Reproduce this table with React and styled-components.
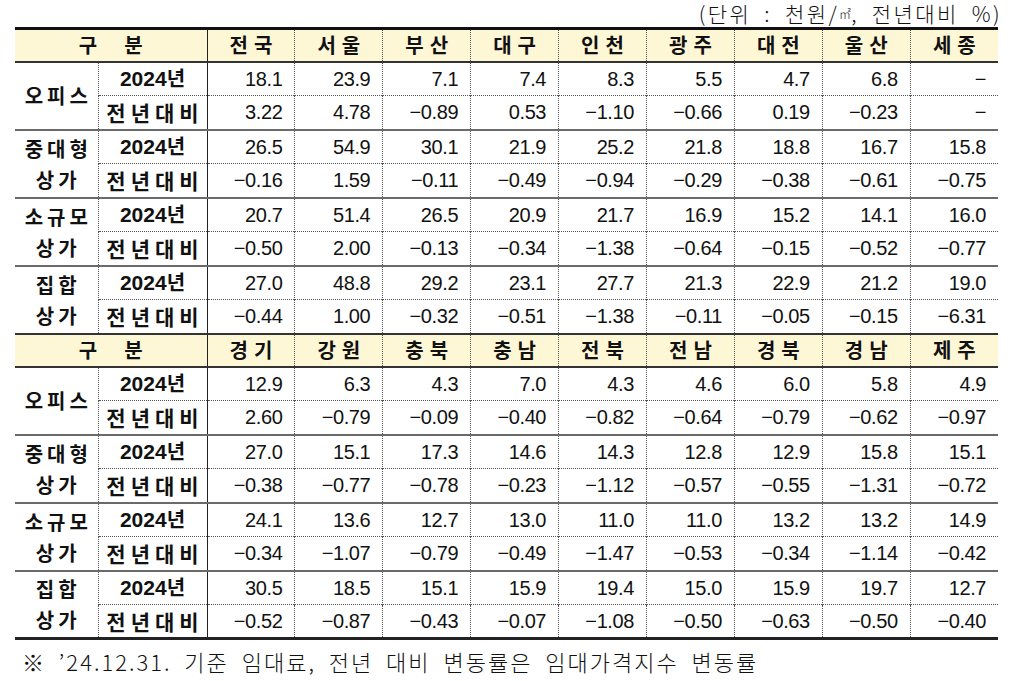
import React from "react";
import styled, { createGlobalStyle } from "styled-components";

const GlobalStyle = createGlobalStyle`
  body {
    margin: 0;
    background: #ffffff;
    color: #111111;
    font-family: "Liberation Sans", "Noto Sans CJK KR", sans-serif;
  }
`;

const Page = styled.div`
  width: 1015px;
  padding: 0 17px 0 15px;
  box-sizing: border-box;
`;

const Unit = styled.div`
  height: 27px;
  display: flex;
  justify-content: flex-end;
  align-items: center;
  font-family: "Noto Sans CJK KR", sans-serif;
  font-size: 21px;
  font-weight: 300;
  letter-spacing: 2.4px;
  word-spacing: 6px;
  line-height: 27px;
  margin-right: -4px;

  small {
    font-size: 12px;
    letter-spacing: 0;
  }
`;

const Table = styled.table`
  width: 983px;
  table-layout: fixed;
  border-collapse: collapse;
  border-top: 3px solid #111;
  border-bottom: 3px solid #222;
`;

const HeadRow = styled.tr`
  height: 33px;
  background: #fef7d6;
  border-top: ${(p) => (p.$first ? "none" : "2px solid #333")};
  border-bottom: 2px solid #333;
`;

const BodyRow = styled.tr`
  height: 34px;
  border-top: ${(p) => (p.$sub ? "1px dotted #555" : "2px solid #6a6a6a")};
`;

const HeadCell = styled.th`
  padding: 0;
  font-family: "Noto Sans CJK KR", sans-serif;
  font-weight: 700;
  font-size: 20px;
  line-height: 28px;
  letter-spacing: 6px;
  text-indent: 6px;
  text-align: center;
  border-left: ${(p) => (p.$solid ? "1px solid #222" : p.$first ? "none" : "1px dotted #555")};
  white-space: pre;
`;

const GroupCell = styled.td`
  padding: 0 0 0 4px;
  font-family: "Noto Sans CJK KR", sans-serif;
  font-weight: 700;
  font-size: 20px;
  letter-spacing: 4px;
  text-align: center;
  line-height: 31px;
  vertical-align: middle;
`;

const SubCell = styled.td`
  padding: 0;
  font-family: ${(p) => (p.$year ? `"Liberation Sans", sans-serif` : `"Noto Sans CJK KR", sans-serif`)};
  font-weight: 700;
  font-size: 21px;
  line-height: 28px;
  letter-spacing: ${(p) => (p.$year ? "0" : "5px")};
  text-indent: ${(p) => (p.$year ? "0" : "5px")};
  text-align: center;
  border-left: 1px dotted #555;
  border-right: 1px solid #222;

  span {
    font-family: "Noto Sans CJK KR", sans-serif;
    font-size: 20px;
    letter-spacing: 0;
  }
`;

const NumCell = styled.td`
  padding: 0 12px 0 0;
  font-family: "Liberation Sans", sans-serif;
  font-size: 20px;
  line-height: 28px;
  letter-spacing: -0.4px;
  text-align: right;
  border-left: ${(p) => (p.$first ? "1px solid #222" : "1px dotted #555")};
`;

const Note = styled.div`
  padding: 6px 0 0 7px;
  font-family: "Noto Sans CJK KR", sans-serif;
  font-weight: 300;
  font-size: 22px;
  line-height: 30px;
  word-spacing: 6px;
  letter-spacing: 2px;
`;

const sections = [
  {
    regions: ["전국", "서울", "부산", "대구", "인천", "광주", "대전", "울산", "세종"],
    groups: [
      { name: ["오피스"], year: ["18.1", "23.9", "7.1", "7.4", "8.3", "5.5", "4.7", "6.8", "−"], diff: ["3.22", "4.78", "−0.89", "0.53", "−1.10", "−0.66", "0.19", "−0.23", "−"] },
      { name: ["중대형", "상가"], year: ["26.5", "54.9", "30.1", "21.9", "25.2", "21.8", "18.8", "16.7", "15.8"], diff: ["−0.16", "1.59", "−0.11", "−0.49", "−0.94", "−0.29", "−0.38", "−0.61", "−0.75"] },
      { name: ["소규모", "상가"], year: ["20.7", "51.4", "26.5", "20.9", "21.7", "16.9", "15.2", "14.1", "16.0"], diff: ["−0.50", "2.00", "−0.13", "−0.34", "−1.38", "−0.64", "−0.15", "−0.52", "−0.77"] },
      { name: ["집합", "상가"], year: ["27.0", "48.8", "29.2", "23.1", "27.7", "21.3", "22.9", "21.2", "19.0"], diff: ["−0.44", "1.00", "−0.32", "−0.51", "−1.38", "−0.11", "−0.05", "−0.15", "−6.31"] },
    ],
  },
  {
    regions: ["경기", "강원", "충북", "충남", "전북", "전남", "경북", "경남", "제주"],
    groups: [
      { name: ["오피스"], year: ["12.9", "6.3", "4.3", "7.0", "4.3", "4.6", "6.0", "5.8", "4.9"], diff: ["2.60", "−0.79", "−0.09", "−0.40", "−0.82", "−0.64", "−0.79", "−0.62", "−0.97"] },
      { name: ["중대형", "상가"], year: ["27.0", "15.1", "17.3", "14.6", "14.3", "12.8", "12.9", "15.8", "15.1"], diff: ["−0.38", "−0.77", "−0.78", "−0.23", "−1.12", "−0.57", "−0.55", "−1.31", "−0.72"] },
      { name: ["소규모", "상가"], year: ["24.1", "13.6", "12.7", "13.0", "11.0", "11.0", "13.2", "13.2", "14.9"], diff: ["−0.34", "−1.07", "−0.79", "−0.49", "−1.47", "−0.53", "−0.34", "−1.14", "−0.42"] },
      { name: ["집합", "상가"], year: ["30.5", "18.5", "15.1", "15.9", "19.4", "15.0", "15.9", "19.7", "12.7"], diff: ["−0.52", "−0.87", "−0.43", "−0.07", "−1.08", "−0.50", "−0.63", "−0.50", "−0.40"] },
    ],
  },
];

const Section = ({ section, first }) => (
  <>
    <HeadRow $first={first}>
      <HeadCell colSpan={2} $first>{"구  분"}</HeadCell>
      {section.regions.map((r, i) => (
        <HeadCell key={r} $solid={i === 0}>{r}</HeadCell>
      ))}
    </HeadRow>
    {section.groups.map((g, gi) => (
      <React.Fragment key={gi}>
        <BodyRow $sub={false} style={gi === 0 ? { borderTop: "none" } : undefined}>
          <GroupCell rowSpan={2}>
            {g.name.map((line) => (
              <div key={line}>{line}</div>
            ))}
          </GroupCell>
          <SubCell $year>
            2024<span>년</span>
          </SubCell>
          {g.year.map((v, i) => (
            <NumCell key={i} $first={i === 0}>{v}</NumCell>
          ))}
        </BodyRow>
        <BodyRow $sub>
          <SubCell>전년대비</SubCell>
          {g.diff.map((v, i) => (
            <NumCell key={i} $first={i === 0}>{v}</NumCell>
          ))}
        </BodyRow>
      </React.Fragment>
    ))}
  </>
);

const App = () => (
  <Page>
    <GlobalStyle />
    <Unit>
      (단위 : 천원/<small>㎡</small>, 전년대비 %)
    </Unit>
    <Table>
      <colgroup>
        <col style={{ width: 83 }} />
        <col style={{ width: 109 }} />
        {Array.from({ length: 9 }).map((_, i) => (
          <col key={i} style={{ width: 87.9 }} />
        ))}
      </colgroup>
      <tbody>
        {sections.map((s, i) => (
          <Section key={i} section={s} first={i === 0} />
        ))}
      </tbody>
    </Table>
    <Note>※ ’24.12.31. 기준 임대료, 전년 대비 변동률은 임대가격지수 변동률</Note>
  </Page>
);

export default App;
